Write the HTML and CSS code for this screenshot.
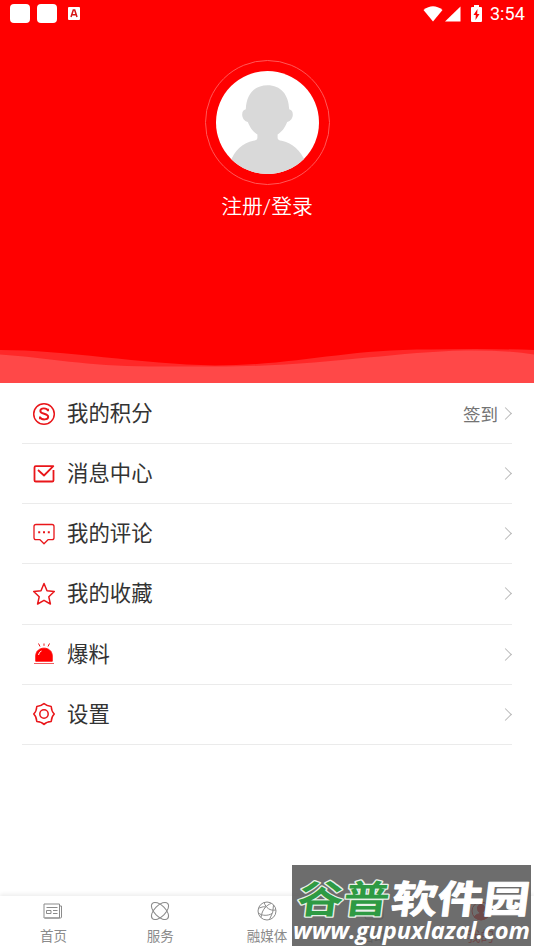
FILE: index.html
```html
<!DOCTYPE html>
<html lang="zh-CN">
<head>
<meta charset="utf-8">
<title>我的</title>
<link rel="stylesheet" href="styles.css">
</head>
<body>
<div class="app">
  <header class="hero">
    <div class="status">
      <div class="status-left">
        <span class="block"></span><span class="block"></span>
        <svg class="note" width="12" height="13" viewBox="0 0 12 13"><rect width="12" height="13" rx="1" fill="#fff"/><path d="M3 10 5.3 3h1.4L9 10M4 7.7h4" fill="none" stroke="#d51616" stroke-width="1.5"/></svg>
      </div>
      <div class="status-right">
        <svg width="20" height="16" viewBox="0 0 20 16"><path d="M.5 4Q10-3.500 19.500 4L10 15.500Z" fill="#fff"/></svg>
        <svg width="16" height="16" viewBox="0 0 16 16"><path d="M15.500.5v15H0z" fill="#fff"/></svg>
        <svg class="battery" width="11" height="17" viewBox="0 0 11 17"><path d="M3 0h5v2h2q1 0 1 1v13q0 1-1 1H1q-1 0-1-1V3q0-1 1-1h2z" fill="#fff"/><path d="M6.500 4 2.500 10h2.300L4.500 15l4-6H6.200z" fill="#f00"/></svg>
        <span class="time">3:54</span>
      </div>
    </div>
    <div class="avatar">
      <svg width="103" height="103" viewBox="0 0 102 102">
        <defs><clipPath id="round"><circle cx="51" cy="51" r="51"/></clipPath></defs>
        <circle cx="51" cy="51" r="51" fill="#fff"/>
        <g clip-path="url(#round)" fill="#d9d9d9"><path d="M51 14C38 14 30 23 29.500 38C24 39 25 49 31.500 50.500C34 57 37 60 41 63V66Q41 68.500 37 69C27 71 18 78 14 91V102H89V91C84 78 75 71 65 69Q61 68.500 61 66V63C65 60 68 57 70.500 50.500C77 49 78 39 72.500 38C72 23 64 14 51 14Z"/></g>
      </svg>
    </div>
    <div class="login">注册/登录</div>
    <svg class="wave" width="534" height="36" viewBox="0 0 534 36">
      <path d="M0 3C65 3 140 17 215 18.500C300 18 340 2.500 430 2.500Q490 1.500 534 3V36H0Z" fill="#ff2828"/>
      <path d="M0 7.500C50 11 85 19 150 19.500H210C320 20 390 5 465 3.500Q505 3 534 7.500V36H0Z" fill="#ff4848"/>
    </svg>
  </header>

  <main class="menu">
    <div class="row">
      <svg class="icon" viewBox="0 0 24 24"><circle cx="12" cy="12" r="10.300"/><path d="M16 9.300V6.800M16 8.700C14.800 5.500 8.300 5.600 8.300 9C8.300 12.500 16.200 11 16.200 14.800C16.200 18.300 9.300 18.200 8 15.100M8 17.200V14.500" stroke-width="1.900"/></svg>
      <span class="label">我的积分</span><span class="extra">签到</span><i class="chev"></i>
    </div>
    <div class="row">
      <svg class="icon" viewBox="0 0 24 24"><path d="M19.500 4.200H3.800Q2.500 4.200 2.500 5.500V18.200Q2.500 19.500 3.800 19.500H20.200Q21.500 19.500 21.500 18.200V8M6 8l6 5.500 9.300-9.300H19" stroke-width="1.800"/></svg>
      <span class="label">消息中心</span><i class="chev"></i>
    </div>
    <div class="row">
      <svg class="icon" viewBox="0 0 24 24"><path d="M4 2.500H20Q22 2.500 22 4.500V15.700Q22 17.700 20 17.700H16L12 21.700 8 17.700H4Q2 17.700 2 15.700V4.500Q2 2.500 4 2.500Z" stroke-width="1.300"/><path d="M6.200 10.300h2M11 10.300h2M15.800 10.300h2" stroke-width="2"/></svg>
      <span class="label">我的评论</span><i class="chev"></i>
    </div>
    <div class="row">
      <svg class="icon" viewBox="0 0 24 24"><path d="M12 1.500 15 8.700 22.300 9.500 16.800 14.800 18.400 22 12 18.300 5.600 22 7.200 14.800 1.700 9.500 9 8.700Z" stroke-width="1.500"/></svg>
      <span class="label">我的收藏</span><i class="chev"></i>
    </div>
    <div class="row">
      <svg class="icon" viewBox="0 0 24 24"><path d="M3.700 19.300V14C3.700 3.500 20.300 3.500 20.300 14V19.300Z" fill="#f00"  stroke="#f00" stroke-width=".8"/><path d="M6.500 13Q7 9.800 9.500 9" stroke="#fff" stroke-width="1"/><path d="M2 21.500h20" stroke-width=".7"/><path d="M6.500 1.500l1.500 3M12 1.500v2.300M17.500 1.500l-1.500 3" stroke-width="1"/></svg>
      <span class="label">爆料</span><i class="chev"></i>
    </div>
    <div class="row">
      <svg class="icon" viewBox="0 0 24 24"><path d="M12 1.600Q14.500 4.200 19.200 4.500Q19.500 9.500 22.300 12Q19.500 14.500 19.200 19.500Q14.500 19.700 12 22.400Q9.500 19.700 4.800 19.500Q4.500 14.500 1.700 12Q4.500 9.500 4.800 4.500Q9.500 4.200 12 1.600Z"/><circle cx="12" cy="12" r="4.200"/></svg>
      <span class="label">设置</span><i class="chev"></i>
    </div>
  </main>

  <nav class="tabs">
    <div class="tab">
      <svg viewBox="0 0 20 20"><path d="M1 3h15.500v14H1zM16.500 5H18.500V16q0 1-1 1H2M3.500 6.500h11M3.500 9.500h4.500v3H3.500zM10 9.500h4.500M10 12.500h4.500"/></svg>
      <span>首页</span>
    </div>
    <div class="tab">
      <svg viewBox="0 0 20 20"><ellipse cx="10" cy="10" rx="10.800" ry="5.500" transform="rotate(45 10 10)"/><ellipse cx="10" cy="10" rx="10.800" ry="5.500" transform="rotate(-45 10 10)"/></svg>
      <span>服务</span>
    </div>
    <div class="tab">
      <svg viewBox="0 0 20 20"><circle cx="10" cy="10" r="9"/><path d="M7 1.500C9 7 13 10 18.700 9M14 2.500C10 4 5 8 4 16.500M1.500 12C5 15 11 15 15 12.500M16.500 4Q17 11 12.500 18.500M2 7Q7 5 9 6"/></svg>
      <span>融媒体</span>
    </div>
    <div class="tab">
      <svg viewBox="0 0 20 20"><rect x="1" y="2" width="18" height="16" rx="2"/></svg>
      <span>活动</span>
    </div>
    <div class="tab active">
      <svg viewBox="0 0 20 20"><circle cx="10" cy="10" r="9"/><path d="M10 3.500c-5 0-4 7-1.500 8v1.200Q5 13 3 16Q10 21.500 17 16Q15 13 11.500 12.700V11.500c2.500-1 3.500-8-1.500-8z" class="person"/></svg>
      <span>我的</span>
    </div>
  </nav>

  <svg class="stamp" width="239" height="81" viewBox="0 0 239 81">
    <rect width="239" height="81" fill="#555" fill-opacity=".86"/>
    <g transform="translate(4 47.500) skewX(-7) scale(1 .83)" class="stamp-name">
      <text class="green" x="0" y="0" textLength="92">谷普</text>
      <text class="white" x="94" y="0" textLength="138">软件园</text>
    </g>
    <text class="stamp-url" x="1" y="74" textLength="237" lengthAdjust="spacingAndGlyphs">www.gupuxlazal.com</text>
  </svg>
</div>
</body>
</html>
```
FILE: styles.css
```css
* { box-sizing: border-box; }
body { margin: 0; background: #fff; font-family: Roboto, "Noto Sans CJK SC", sans-serif; }
.app { position: relative; width: 534px; height: 950px; display: flex; flex-direction: column; overflow: hidden; }
svg { display: block; flex: none; }

.hero { height: 383px; background: #f00; display: flex; flex-direction: column; align-items: center; flex: none; }
.status { width: 100%; height: 27px; padding: 0 9px 0 10px; display: flex; justify-content: space-between; align-items: center; }
.status-left, .status-right { display: flex; align-items: center; }
.status-left { gap: 7px; }
.block { width: 20px; height: 19px; border-radius: 4px; background: #fff; }
.note { margin-left: 4px; }
.status-right { gap: 2px; }
.battery { margin-left: 8px; }
.time { margin-left: 6px; color: #fff; font-size: 18px; line-height: 26px; letter-spacing: .1px; }
.avatar { width: 125px; height: 125px; margin-top: 33px; border: 1px solid #ff5858; border-radius: 50%; display: flex; align-items: center; justify-content: center; flex: none; }
.login { margin-top: 7px; color: #fff; font-size: 20.800px; font-weight: 350; line-height: 30px; white-space: nowrap; }
.wave { margin-top: auto; }

.menu { padding: 1px 22px 0; flex: 1; }
.row { height: 60.150px; border-bottom: 1px solid #ebebeb; display: flex; align-items: center; padding-left: 10px; }
.icon { width: 24px; height: 24px; fill: none; stroke: #e9161a; stroke-width: 1.500; stroke-linejoin: round; }
.label { margin-left: 11px; padding-top: 1px; flex: 1; font-size: 21.400px; line-height: 30px; color: #333; }
.extra { font-size: 17.500px; color: #737373; margin-right: 3px; }
.chev { width: 9px; height: 9px; border: solid #b8b8b8; border-width: 1px 1px 0 0; transform: rotate(45deg); margin-right: 2px; }

.tabs { height: 54px; display: flex; flex: none; background: #fff; box-shadow: 0 -2px 4px rgba(0,0,0,.07); }
.tab { flex: 1; display: flex; flex-direction: column; align-items: center; padding-top: 5px; color: #8b8b8b; font-size: 13.500px; }
.tab svg { width: 20px; height: 20px; fill: none; stroke: #8b8b8b; stroke-width: 1; overflow: visible; }
.tab span { line-height: 20px; margin-top: 5px; }
.tab.active { color: #f00; }
.tab.active svg { stroke: #f00; }
.tab.active .person { fill: #f00; }

.stamp { position: absolute; left: 292px; top: 865px; overflow: visible; }
.stamp-name { font-family: "Noto Sans CJK SC", sans-serif; font-size: 46px; font-weight: 700; paint-order: stroke; stroke-linejoin: round; }
.green { fill: #2e9a43; stroke: #e8f0e8; stroke-width: 3px; }
.white { fill: #fff; stroke: #fff; stroke-width: 1.200px; }
.stamp-url { font: italic bold 23px "Open Sans", sans-serif; fill: #fff; }
```
